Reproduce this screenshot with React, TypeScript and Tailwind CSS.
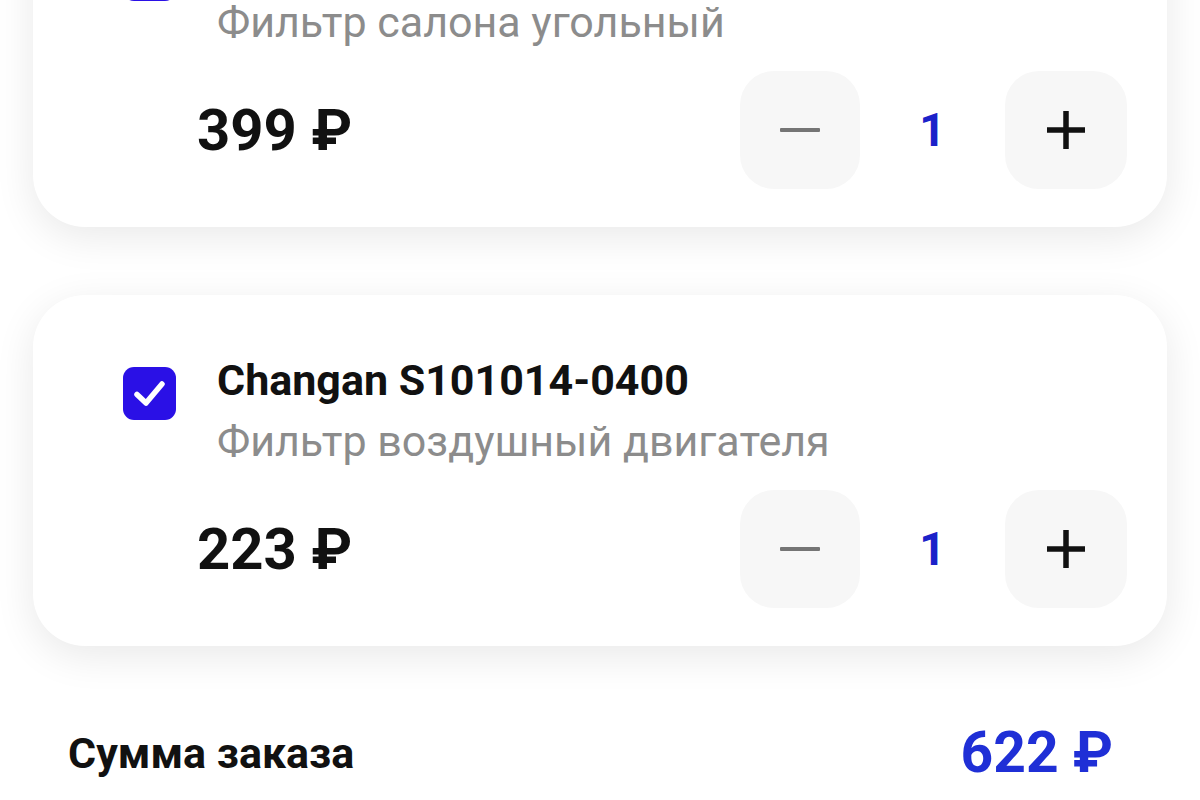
import React from "react";

const font = { fontFamily: "Roboto, 'Noto Sans', 'DejaVu Sans', sans-serif" };

function Check() {
  return (
    <div className="w-[53px] h-[53px] rounded-[11px] bg-[#2a10e6] flex items-center justify-center shrink-0 mt-[17px]">
      <svg width="53" height="53" viewBox="0 0 53 53">
        <path d="M14 27.5 L23 36 L39 17" fill="none" stroke="white" strokeWidth="5.5" strokeLinecap="round" strokeLinejoin="round" />
      </svg>
    </div>
  );
}

function Stepper() {
  return (
    <div className="flex items-center">
      <div className="w-[120px] h-[118px] rounded-[34px] bg-[#f7f7f7] flex items-center justify-center">
        <svg width="40" height="6" viewBox="0 0 40 6">
          <rect x="0" y="1" width="40" height="4" rx="1" fill="#757575" />
        </svg>
      </div>
      <div className="w-[145px] text-center text-[46px] leading-none font-bold text-[#1b22c9]">1</div>
      <div className="w-[122px] h-[118px] rounded-[34px] bg-[#f7f7f7] flex items-center justify-center">
        <svg width="42" height="42" viewBox="0 0 42 42">
          <path d="M21 2 V40 M2 21 H40" stroke="#111" strokeWidth="5.5" strokeLinecap="butt" />
        </svg>
      </div>
    </div>
  );
}

function Card({ title, subtitle, price }: { title?: string; subtitle: string; price: string }) {
  return (
    <div className="bg-white rounded-[52px] shadow-[0_10px_40px_rgba(0,0,0,0.09)] pt-[55px] pb-[38px] pr-[40px]">
      <div className="flex items-start pl-[90px]">
        <Check />
        <div className="ml-[41px] flex flex-col">
          {title ? (
            <div className="text-[43px] leading-[60px] font-bold text-[#111]">{title}</div>
          ) : (
            <div className="h-[60px]" />
          )}
          <div className="mt-[9px] text-[43px] leading-[44px] text-[#8c8c8c]">{subtitle}</div>
        </div>
      </div>
      <div className="flex items-center justify-between pl-[164px] mt-[27px]">
        <div className="text-[58px] leading-none font-bold text-[#111]">{price}</div>
        <Stepper />
      </div>
    </div>
  );
}

export default function App() {
  return (
    <div className="w-[1200px] h-[800px] overflow-hidden bg-white" style={font}>
      <div className="px-[33px] -mt-[124px] flex flex-col gap-[68px]">
        <Card subtitle="Фильтр салона угольный" price="399 ₽" />
        <Card title="Changan S101014-0400" subtitle="Фильтр воздушный двигателя" price="223 ₽" />
      </div>
      <div className="flex items-center justify-between pl-[68px] pr-[87px] mt-[82px]">
        <div className="text-[43px] leading-[50px] font-bold text-[#111]">Сумма заказа</div>
        <div className="text-[57px] leading-[50px] font-bold text-[#1f2fd6]">622 ₽</div>
      </div>
    </div>
  );
}
